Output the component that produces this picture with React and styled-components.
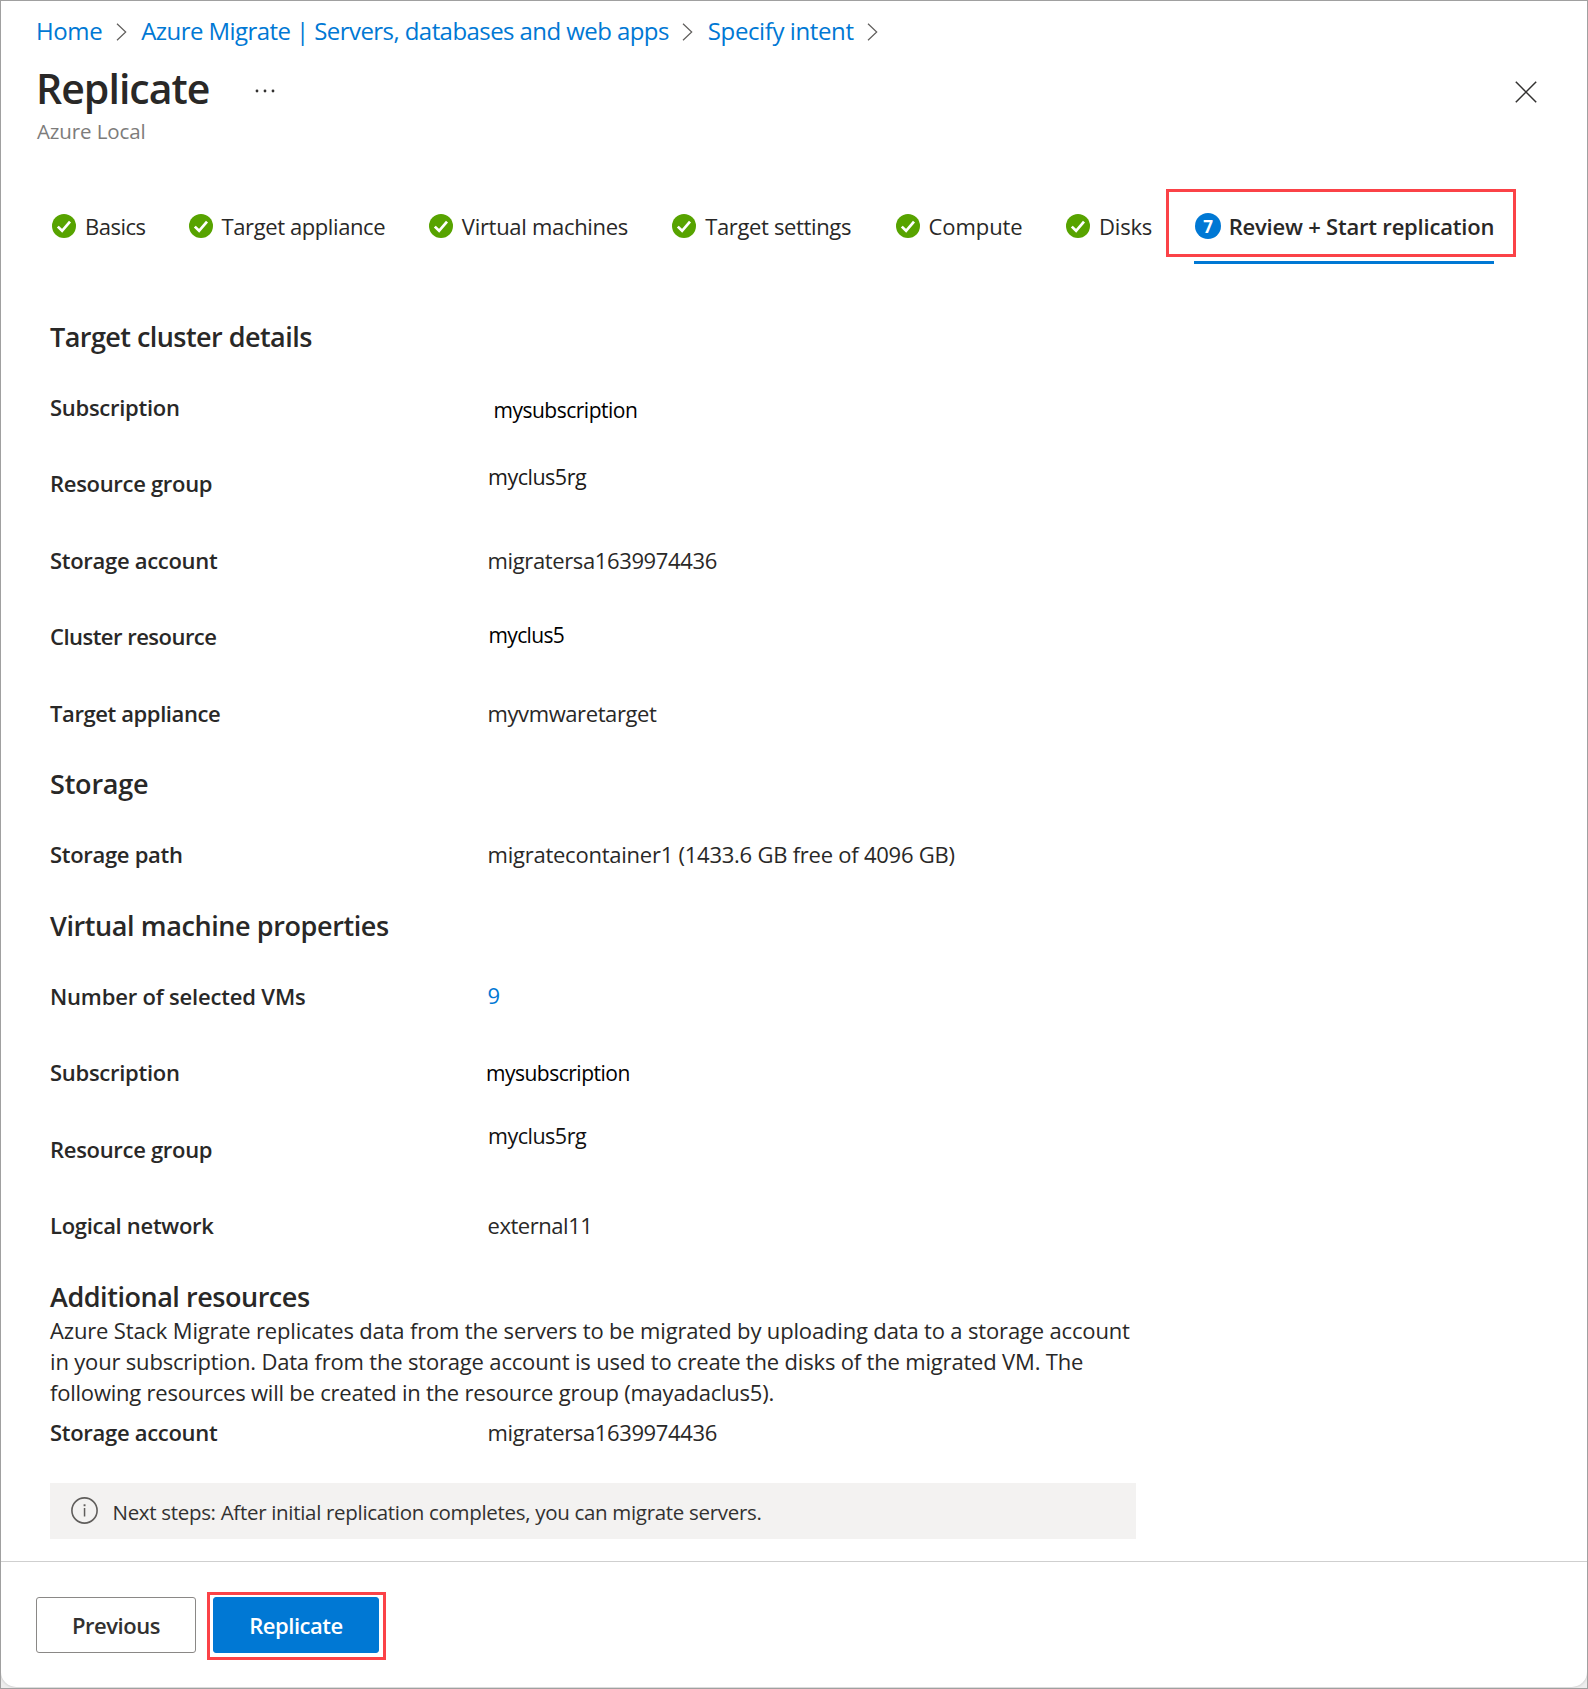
import React from "react";
import styled, { createGlobalStyle, css } from "styled-components";

const GlobalStyle = createGlobalStyle`
  *, *::before, *::after { box-sizing: border-box; }
  body {
    margin: 0;
    background: #fff;
    color: #292827;
    font-family: "Open Sans", "Noto Sans", sans-serif;
  }
  h1, h2, p, dl, dt, dd, ol { margin: 0; padding: 0; }
  ol { list-style: none; }
`;

const tracking = css`
  letter-spacing: ${(p) => p.$track || 0}px;
  white-space: nowrap;
`;

const Frame = styled.div`
  width: 1588px;
  height: 1689px;
  border: 1px solid #a0a0a0;
  background: #eeeeee;
  overflow: hidden;
`;

const Blade = styled.div`
  display: flex;
  flex-direction: column;
  height: 1686px;
  background: #fff;
  border-radius: 0 0 15px 15px;
  box-shadow: 0 0 3px rgba(0, 0, 0, 0.22);
`;

const Breadcrumb = styled.nav`
  display: flex;
  align-items: center;
  height: 32px;
  margin: 14px 0 0 35px;
`;

const Crumb = styled.a`
  ${tracking}
  font-size: 24px;
  line-height: 32px;
  color: #0078d4;
  text-decoration: none;
`;

const ChevronIcon = styled.svg`
  flex: none;
  width: 11px;
  height: 18px;
  margin: 2px 14.5px 0 13.5px;
  fill: none;
  stroke: #605e5c;
  stroke-width: 1.2;
`;

const TitleBar = styled.header`
  display: flex;
  align-items: flex-start;
  margin: 14px 50px 0 35px;
`;

const TitleText = styled.div`
  width: 239px;
`;

const Title = styled.h1`
  ${tracking}
  font-size: 41px;
  font-weight: 600;
  line-height: 54px;
`;

const Subtitle = styled.p`
  ${tracking}
  margin-top: 2px;
  padding-left: 1px;
  font-size: 20.5px;
  line-height: 28px;
  color: #7d7c7b;
`;

const IconButton = styled.button`
  display: flex;
  padding: 0;
  border: 0;
  background: none;
  margin-top: ${(p) => p.$top}px;
  margin-left: ${(p) => (p.$end ? "auto" : "-20px")};
`;

const Steps = styled.ol`
  display: flex;
  align-items: flex-start;
  height: 53px;
  margin: 66px 0 0 51px;
`;

const Step = styled.li`
  position: relative;
  display: flex;
  align-items: center;
  gap: ${(p) => (p.$active ? 7.5 : 9)}px;
  height: 30px;
  margin-right: ${(p) => p.$after || 0}px;
  ${(p) =>
    p.$active &&
    css`
      height: 53px;
      padding: 0 0 20px 1px;
      border-bottom: 3px solid #0078d4;
      font-weight: 600;
    `}
`;

const StepLabel = styled.span`
  ${tracking}
  font-size: 22px;
  line-height: 30px;
`;

const StepIcon = styled.svg`
  flex: none;
  width: 24px;
  height: 24px;
  margin-bottom: 1px;
`;

const StepNumber = styled.span`
  flex: none;
  width: 26px;
  height: 26px;
  margin-bottom: 1px;
  border-radius: 50%;
  background: #0078d4;
  color: #fff;
  font-size: 17px;
  font-weight: 700;
  line-height: 27px;
  text-align: center;
`;

const Highlight = styled.span`
  position: absolute;
  top: ${(p) => p.$top}px;
  left: ${(p) => p.$left}px;
  width: ${(p) => p.$w}px;
  height: ${(p) => p.$h}px;
  border: 3px solid #fb4247;
  pointer-events: none;
`;

const Content = styled.main`
  display: flex;
  flex-direction: column;
  gap: 38.6px;
  margin: 55px 0 0 49px;
`;

const Heading = styled.h2`
  ${tracking}
  font-size: 27px;
  font-weight: 600;
  line-height: 36px;
`;

const Rows = styled.dl`
  display: flex;
  flex-direction: column;
  gap: 46.4px;
  margin-top: ${(p) => p.$top}px;
`;

const Row = styled.div`
  display: grid;
  grid-template-columns: 437.5px auto;
  height: 30px;
`;

const Label = styled.dt`
  ${tracking}
  font-size: 22px;
  font-weight: 600;
  line-height: 30px;
`;

const Value = styled.dd`
  ${tracking}
  && {
    margin: ${(p) => p.$dy || 0}px 0 0 ${(p) => p.$dx || 0}px;
  }
  font-size: ${(p) => p.$size || 22}px;
  line-height: 30px;
  color: ${(p) => p.$color || "inherit"};
`;

const Line = styled.span`
  ${tracking}
  display: block;
  font-size: 22px;
  line-height: 31px;
`;

const InfoBar = styled.aside`
  display: flex;
  align-items: center;
  gap: 14.5px;
  width: 1086px;
  height: 56px;
  margin: 36px 0 0 49px;
  padding-left: 21px;
  background: #f3f2f1;
`;

const InfoIcon = styled.svg`
  flex: none;
  width: 27px;
  height: 27px;
  margin-bottom: 1px;
`;

const InfoText = styled.p`
  ${tracking}
  padding-top: 2px;
  font-size: 20.5px;
  line-height: 28px;
  color: #323130;
`;

const Footer = styled.footer`
  display: flex;
  align-items: flex-start;
  gap: 17px;
  margin-top: auto;
  height: 126px;
  padding: 35px 0 0 35px;
  border-top: 1px solid #cfcfcf;
`;

const ButtonSlot = styled.div`
  position: relative;
`;

const Button = styled.button`
  ${tracking}
  display: block;
  width: ${(p) => (p.$primary ? 166 : 160)}px;
  height: 56px;
  padding: 0;
  border: 1px solid ${(p) => (p.$primary ? "#0078d4" : "#8a8886")};
  border-radius: 3px;
  background: ${(p) => (p.$primary ? "#0078d4" : "#fff")};
  color: ${(p) => (p.$primary ? "#fff" : "#323130")};
  font-family: inherit;
  font-size: 22px;
  font-weight: 600;
  line-height: 54px;
`;

const Chevron = () => (
  <ChevronIcon viewBox="0 0 11 18">
    <path d="M1 0.7 L9.7 9 L1 17.3" />
  </ChevronIcon>
);

const CheckIcon = () => (
  <StepIcon viewBox="0 0 24 24">
    <circle cx="12" cy="12" r="12" fill="#57a300" />
    <path d="M5.8 12.6 L10.1 16.8 L18 7.6" fill="none" stroke="#fff" strokeWidth="2.7" />
  </StepIcon>
);

const crumbs = [
  { text: "Home", track: -0.4 },
  { text: "Azure Migrate | Servers, databases and web apps", track: -0.57 },
  { text: "Specify intent", track: -0.4 },
];

const steps = [
  { text: "Basics", track: -0.5, after: 43 },
  { text: "Target appliance", track: -0.4, after: 43.7 },
  { text: "Virtual machines", track: -0.3, after: 44.2 },
  { text: "Target settings", track: -0.36, after: 44.5 },
  { text: "Compute", track: -0.08, after: 43.5 },
  { text: "Disks", track: -0.2, after: 42 },
];

const black = "#000";

const sections = [
  {
    title: "Target cluster details",
    track: -0.55,
    rows: [
      { label: "Subscription", lt: -0.28, value: "mysubscription", vt: -0.5, size: 21, dx: 6, dy: 3, color: black },
      { label: "Resource group", lt: -0.3, value: "myclus5rg", vt: -0.5, size: 21.5, dx: 0.5, dy: -6.5, color: "#1b1a19" },
      { label: "Storage account", lt: -0.29, value: "migratersa1639974436", vt: -0.37 },
      { label: "Cluster resource", lt: -0.52, value: "myclus5", vt: -0.65, size: 21, dx: 1, dy: -1, color: black },
      { label: "Target appliance", lt: -0.4, value: "myvmwaretarget", vt: -0.4 },
    ],
  },
  {
    title: "Storage",
    track: -0.2,
    rows: [
      { label: "Storage path", lt: -0.3, value: "migratecontainer1 (1433.6 GB free of 4096 GB)", vt: -0.24 },
    ],
  },
  {
    title: "Virtual machine properties",
    track: -0.4,
    rows: [
      { label: "Number of selected VMs", lt: -0.18, value: "9", dy: -0.5, color: "#0078d4" },
      { label: "Subscription", lt: -0.28, value: "mysubscription", vt: -0.5, size: 21, dx: -1.5, dy: 1, color: black },
      { label: "Resource group", lt: -0.3, value: "myclus5rg", vt: -0.5, size: 21.5, dx: 0.5, dy: -13, color: "#111" },
      { label: "Logical network", lt: -0.3, value: "external11", vt: -0.45 },
    ],
  },
];

const paragraph = [
  { text: "Azure Stack Migrate replicates data from the servers to be migrated by uploading data to a storage account", track: -0.159 },
  { text: "in your subscription. Data from the storage account is used to create the disks of the migrated VM. The", track: -0.178 },
  { text: "following resources will be created in the resource group (mayadaclus5).", track: -0.22 },
];

const Property = ({ row }) => (
  <Row>
    <Label $track={row.lt}>{row.label}</Label>
    <Value $track={row.vt} $size={row.size} $dx={row.dx} $dy={row.dy} $color={row.color}>
      {row.value}
    </Value>
  </Row>
);

export default function App() {
  return (
    <Frame>
      <GlobalStyle />
      <Blade>
        <Breadcrumb>
          {crumbs.map((c) => (
            <React.Fragment key={c.text}>
              <Crumb $track={c.track}>{c.text}</Crumb>
              <Chevron />
            </React.Fragment>
          ))}
        </Breadcrumb>

        <TitleBar>
          <TitleText>
            <Title $track={-0.97}>Replicate</Title>
            <Subtitle $track={-0.12}>Azure Local</Subtitle>
          </TitleText>
          <IconButton $top={28} aria-label="More">
            <svg width="20" height="4" viewBox="0 0 20 4" fill="#323130">
              <circle cx="2" cy="2" r="1.4" />
              <circle cx="10" cy="2" r="1.4" />
              <circle cx="18" cy="2" r="1.4" />
            </svg>
          </IconButton>
          <IconButton $end $top={19.5} aria-label="Close">
            <svg width="22" height="22" viewBox="0 0 22 22" fill="none" stroke="#323130" strokeWidth="1.5">
              <path d="M0.8 0.8 L21.2 21.2 M21.2 0.8 L0.8 21.2" />
            </svg>
          </IconButton>
        </TitleBar>

        <Steps>
          {steps.map((s) => (
            <Step key={s.text} $after={s.after}>
              <CheckIcon />
              <StepLabel $track={s.track}>{s.text}</StepLabel>
            </Step>
          ))}
          <Step $active>
            <StepNumber>7</StepNumber>
            <StepLabel $track={-0.2}>Review + Start replication</StepLabel>
            <Highlight $top={-22} $left={-28} $w={350} $h={68} />
          </Step>
        </Steps>

        <Content>
          {sections.map((s) => (
            <section key={s.title}>
              <Heading $track={s.track}>{s.title}</Heading>
              <Rows $top={37}>
                {s.rows.map((r) => (
                  <Property key={r.label} row={r} />
                ))}
              </Rows>
            </section>
          ))}
          <section>
            <Heading $track={-0.46}>Additional resources</Heading>
            <p>
              {paragraph.map((l) => (
                <Line key={l.text} $track={l.track}>{l.text} </Line>
              ))}
            </p>
            <Rows $top={9}>
              <Property row={{ label: "Storage account", lt: -0.29, value: "migratersa1639974436", vt: -0.37 }} />
            </Rows>
          </section>
        </Content>

        <InfoBar>
          <InfoIcon viewBox="0 0 27 27">
            <circle cx="13.5" cy="13.5" r="12.6" fill="none" stroke="#605e5c" strokeWidth="1.6" />
            <rect x="12.8" y="11" width="1.5" height="8.5" fill="#605e5c" />
            <rect x="12.6" y="7.3" width="1.9" height="1.9" fill="#605e5c" />
          </InfoIcon>
          <InfoText $track={-0.31}>
            Next steps: After initial replication completes, you can migrate servers.
          </InfoText>
        </InfoBar>

        <Footer>
          <Button $track={-0.45}>Previous</Button>
          <ButtonSlot>
            <Button $primary $track={-0.45}>Replicate</Button>
            <Highlight $top={-5} $left={-6} $w={179} $h={68} />
          </ButtonSlot>
        </Footer>
      </Blade>
    </Frame>
  );
}
